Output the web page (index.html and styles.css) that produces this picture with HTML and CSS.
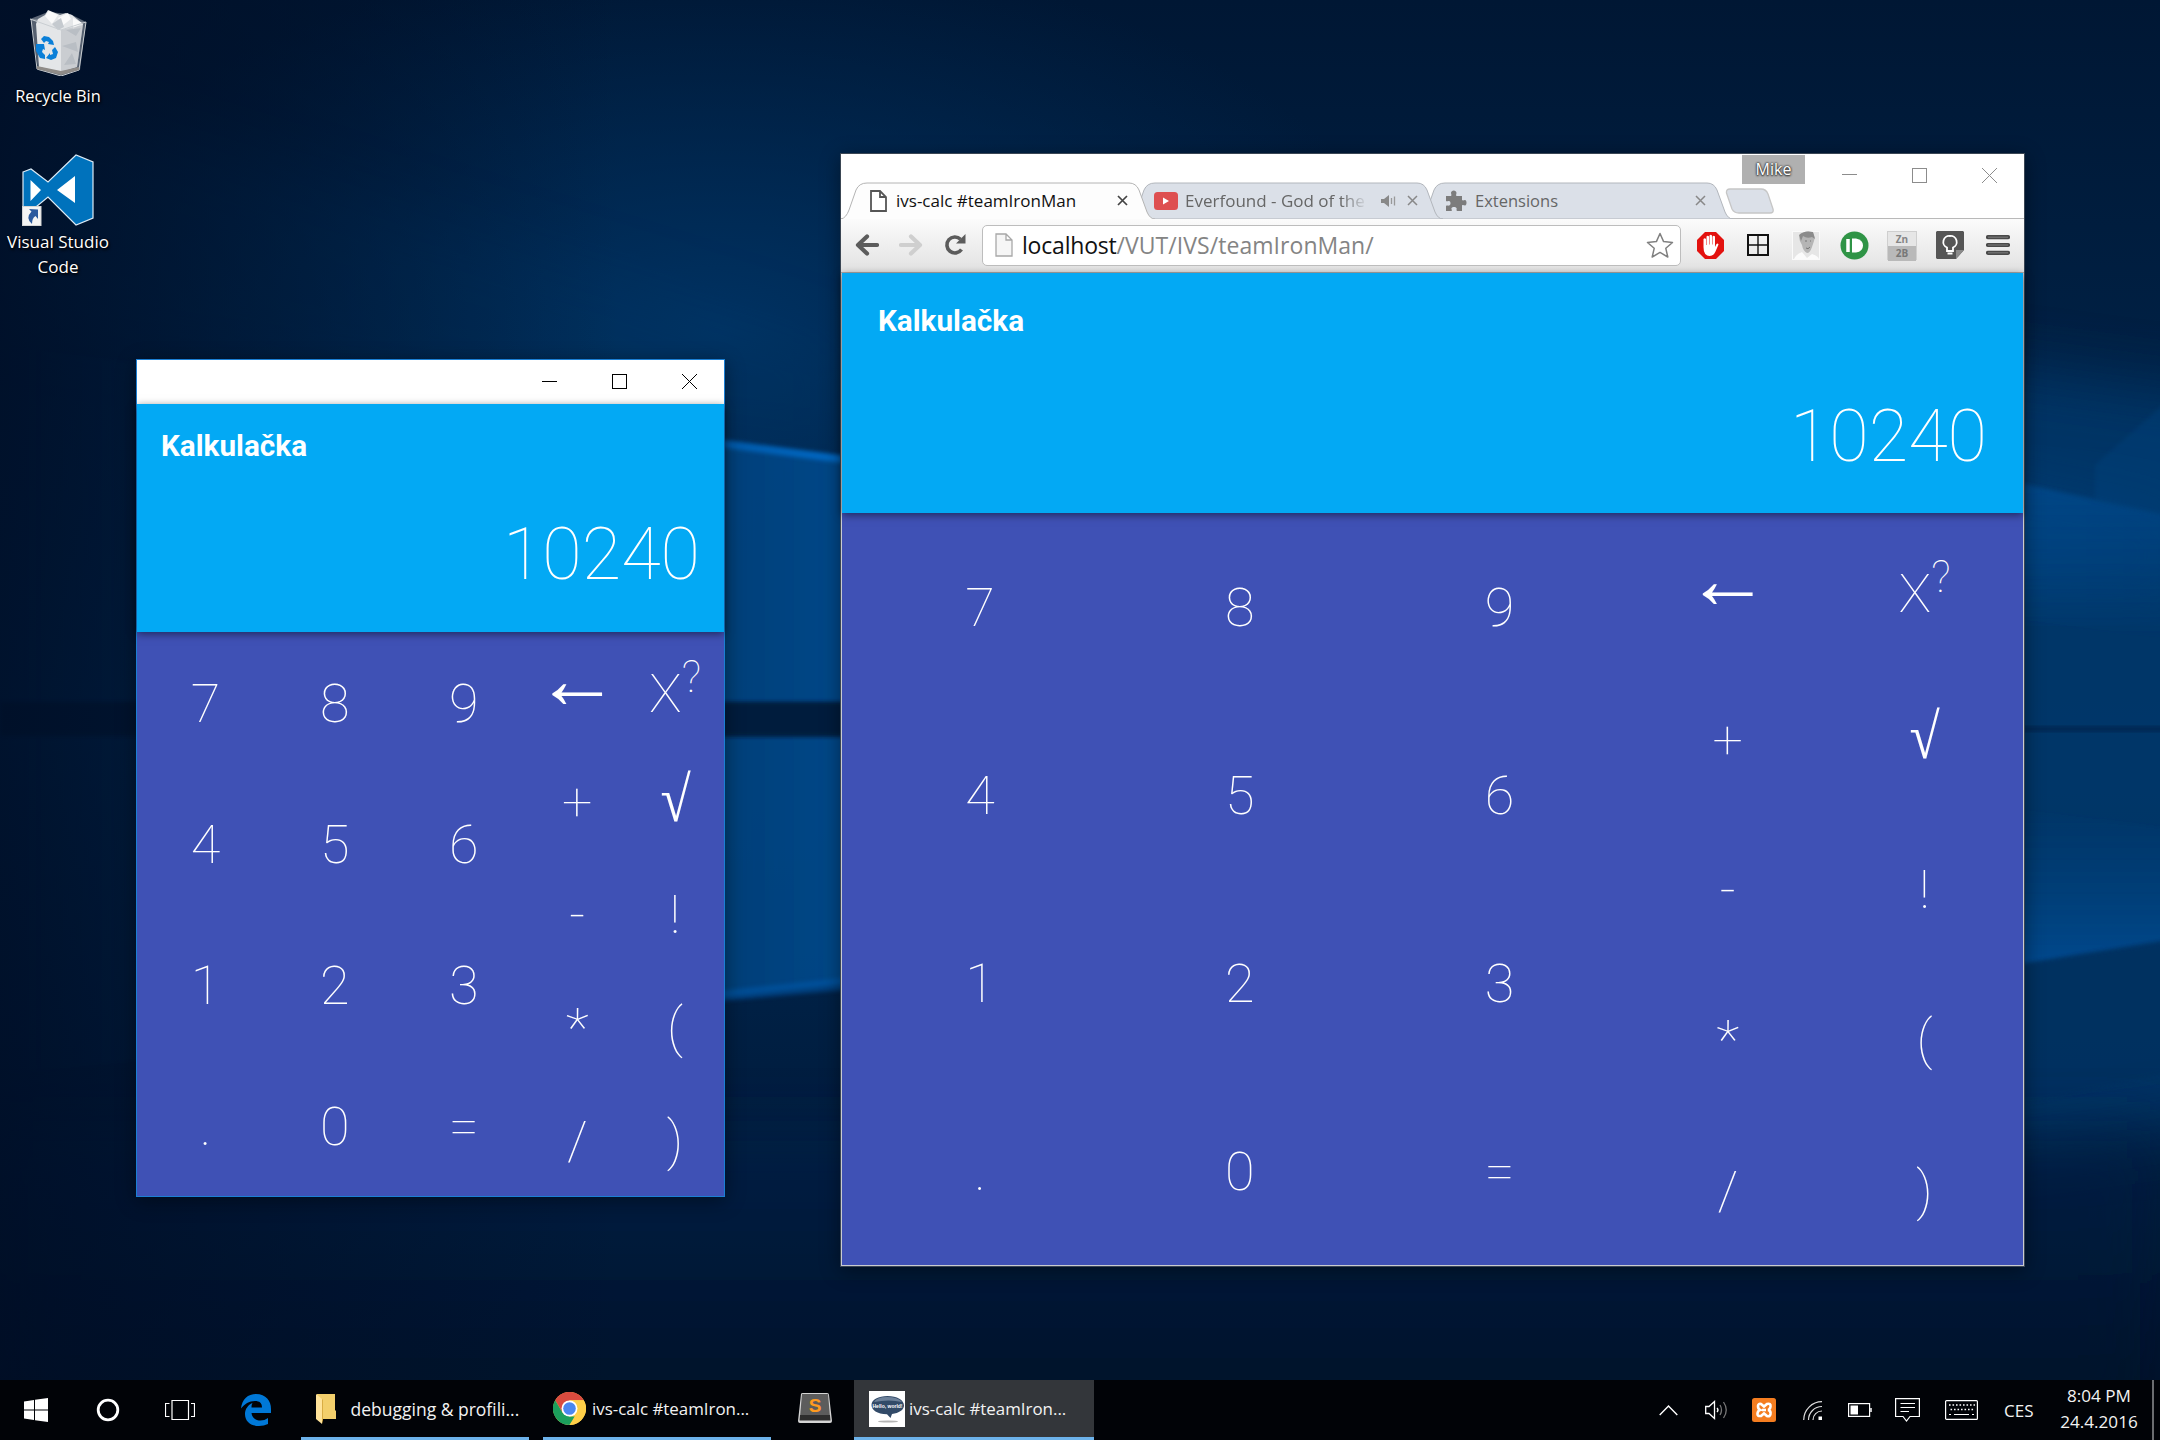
FILE: index.html
```html
<!DOCTYPE html>
<html lang="en">
<head>
<meta charset="utf-8">
<title>Desktop</title>
<link rel="stylesheet" href="styles.css">
</head>
<body>
<div class="desktop">
  <svg class="wallpaper" viewBox="0 0 2160 1440" preserveAspectRatio="none" aria-hidden="true">
    <defs>
      <linearGradient id="base" x1="0" y1="0" x2="0" y2="1"><stop offset="0" stop-color="#001734"/><stop offset=".5" stop-color="#002a54"/><stop offset=".8" stop-color="#001b3c"/><stop offset="1" stop-color="#000e24"/></linearGradient>
      <radialGradient id="top" cx="0" cy="0" r="1" gradientUnits="userSpaceOnUse" gradientTransform="translate(720 330) scale(700 380)"><stop offset="0" stop-color="#003262"/><stop offset="1" stop-color="#002c58" stop-opacity="0"/></radialGradient>
      <linearGradient id="beam" x1="0" y1="0" x2="1" y2="0"><stop offset="0" stop-color="#00376c" stop-opacity="0"/><stop offset=".35" stop-color="#00305c" stop-opacity=".5"/><stop offset="1" stop-color="#004c90"/></linearGradient>
      <linearGradient id="ray" x1="0" y1="0" x2="1" y2="0"><stop offset="0" stop-color="#0068c4" stop-opacity="0"/><stop offset=".6" stop-color="#0068c4" stop-opacity=".5"/><stop offset="1" stop-color="#0070d2"/></linearGradient>
      <linearGradient id="right" x1="0" y1="0" x2="1" y2="0"><stop offset="0" stop-color="#00498c"/><stop offset="1" stop-color="#003c74"/></linearGradient>
      <linearGradient id="dark" x1="0" y1="0" x2="1" y2="0"><stop offset="0" stop-color="#000d24"/><stop offset="1" stop-color="#000d24" stop-opacity="0"/></linearGradient>
      <linearGradient id="foot" x1="0" y1="0" x2="0" y2="1"><stop offset="0" stop-color="#00234a"/><stop offset="1" stop-color="#000f26"/></linearGradient>
      <linearGradient id="fadedown" x1="0" y1="0" x2="0" y2="1"><stop offset="0" stop-color="#004f98" stop-opacity=".7"/><stop offset="1" stop-color="#004785" stop-opacity="0"/></linearGradient>
      <linearGradient id="fadeup" x1="0" y1="1" x2="0" y2="0"><stop offset="0" stop-color="#0052a0" stop-opacity=".75"/><stop offset="1" stop-color="#004785" stop-opacity="0"/></linearGradient>
      <filter id="b2" x="-10%" y="-40%" width="120%" height="180%"><feGaussianBlur stdDeviation="2"/></filter>
      <filter id="b30" x="-20%" y="-20%" width="140%" height="140%"><feGaussianBlur stdDeviation="30"/></filter>
    </defs>
    <rect width="2160" height="1440" fill="url(#base)"/>
    <rect width="2160" height="800" fill="url(#top)"/>
    <path d="M0 80 L840 340 V460 L0 330Z" fill="#003768" opacity=".2" filter="url(#b30)"/>
    <path d="M0 345 L900 465 V704 H0Z" fill="url(#beam)" filter="url(#b2)"/>
    <path d="M0 736 H900 V978 L0 1075Z" fill="url(#beam)" filter="url(#b2)"/>
    <path d="M300 384 L725 440 L900 463 V470 L725 448Z" fill="url(#ray)" filter="url(#b2)"/>
    <path d="M600 1003 L900 972 V985 L600 1012Z" fill="#005cb0" opacity=".5" filter="url(#b2)"/>
    <rect x="0" y="702" width="900" height="34" fill="#001c3d" filter="url(#b2)"/>
    <path d="M1950 360 L2250 400 V1120 L1950 1160Z" fill="#003a70" opacity=".75" filter="url(#b30)"/>
    <path d="M1950 473 L2180 515 V600 L1950 600Z" fill="url(#right)" opacity=".5" filter="url(#b30)"/>
    <path d="M1950 468 L2180 518 V640 L1950 610Z" fill="url(#fadedown)" filter="url(#b2)"/>
    <path d="M2095 465 L2180 390 V520 L2095 500Z" fill="#004785" opacity=".3" filter="url(#b2)"/>
    <path d="M1950 800 L2180 830 V938 L1950 976Z" fill="url(#fadeup)" filter="url(#b2)"/>
    <path d="M1950 975 L2180 940 V1070 L1950 1120Z" fill="#002e5c" opacity=".45" filter="url(#b2)"/>
    <path d="M1950 727 H2180 V731 H1950Z" fill="#001f42" opacity=".8" filter="url(#b2)"/>
    <rect y="1130" width="2160" height="310" fill="url(#foot)" opacity=".65" filter="url(#b30)"/>
    <rect width="620" height="1440" fill="url(#dark)" opacity=".8"/>
  </svg>

  <div class="shortcuts">
    <div class="shortcut bin">
      <svg width="60" height="66" viewBox="0 0 60 66">
        <path d="M3 9 L10 60 L33 66 L52 60 L58 12Z" fill="#9aa2a9" opacity=".55"/>
        <path d="M2 9 L20 2 L42 4 L58 12 L33 20Z" fill="#b9c0c6" opacity=".5"/>
        <path d="M8 14 L11 57 L33 62 L49 57 L55 14 L44 5 L38 3 L32 5 L20 0 L17 5 L10 9Z" fill="#e4e6e8"/>
        <path d="M17 6 L21 1 L30 5 L24 14Z M30 8 L40 3 L43 9 L34 16Z M45 8 L54 13 L45 19Z" fill="#fafafa"/>
        <path d="M24 14 L33 8 L36 17 L30 20Z M38 20 L53 18 L48 26Z M34 36 L48 32 L50 42Z M36 55 L44 43 L48 54Z" fill="#c5cacf"/>
        <path d="M33 20 V62 L49 57 L55 15Z" fill="#aab0b6" opacity=".45"/>
        <path d="M2 9 L33 20 L58 12 M3 9 L9 59 L33 66 L51 60 L58 12" fill="none" stroke="#c9ced2" stroke-width="1"/>
        <path d="M9 59 L33 65 L51 60 L51 57 L33 61 L9 56Z" fill="#8f8b87"/>
        <g fill="#0a7fd8"><path d="M13 29 L16 26 L21 27 L25 31 L26 35 L20 34 L21 32 L18 31 L16 33 Z"/><path d="M8 34 L16 34 L17 40 L15 39 L14 42 L17 45 V49 L12 48 L8 41Z"/><path d="M27 37 L30 42 L28 48 L23 50 L18 48 L22 43 L22 45 L25 44 L24 40Z"/></g>
      </svg>
      <span class="shortcut-label">Recycle Bin</span>
    </div>
    <div class="shortcut code">
      <svg width="72" height="72" viewBox="0 0 72 72">
        <path d="M1 18 L9 15 L26 28 L54 1 L71 8 V64 L54 71 L26 43 L9 57 L1 53Z" fill="#0072bc" stroke="#dcebf6" stroke-width="1.2"/>
        <path d="M8.500 26 V47 L19 36Z M53 22 V49 L35 36Z" fill="#fff"/>
        <rect x=".5" y="52.500" width="18.500" height="19" fill="#f4f4f4" stroke="#d5d5d5"/>
        <path d="M7 55 L16 55.500 V65 L13.500 62 Q10 64 10 70 Q3 64 9.500 57.500Z" fill="#2c5a9e"/>
      </svg>
      <span class="shortcut-label wide">Visual Studio</span><span class="shortcut-label">Code</span>
    </div>
  </div>

  <section class="window app">
    <header class="titlebar">
      <svg width="15" height="15"><path d="M0 7.500H15" stroke="#000"/></svg>
      <svg width="15" height="15"><rect x=".5" y=".5" width="14" height="14" fill="none" stroke="#000"/></svg>
      <svg width="15" height="15"><path d="M0 0L15 15M15 0L0 15" stroke="#000"/></svg>
    </header>
    <div class="calc">
      <div class="display"><h1>Kalkulačka</h1><output>10240</output></div>
      <div class="keypad">
        <div class="digits"><b>7</b><b>8</b><b>9</b><b>4</b><b>5</b><b>6</b><b>1</b><b>2</b><b>3</b><b>.</b><b>0</b><b>=</b></div>
        <div class="ops"><b><i class="arrow">←</i></b><b class="pow">X<sup>?</sup></b><b>+</b><b><i class="root">√</i></b><b>-</b><b>!</b><b>*</b><b>(</b><b>/</b><b>)</b></div>
      </div>
    </div>
  </section>

  <section class="window chrome">
    <header class="strip">
      <div class="tab active">
        <svg class="shape" width="314" height="37" viewBox="0 0 314 37"><path d="M0 37 Q5 36 8 28 L15 8 Q18 1 26 1 H288 Q295 1 298 8 L306 30 Q309 37 314 37" fill="#fdfdfd" stroke="#b4b4b4"/></svg>
        <svg class="fav" width="17" height="22" viewBox="0 0 17 22"><path d="M1 1H10L16 7V21H1Z M10 1V7H16" fill="#fff" stroke="#555" stroke-width="1.800"/></svg>
        <span class="tab-title t1">ivs-calc #teamIronMan</span>
        <svg class="close" width="11" height="11"><path d="M1 1L10 10M10 1L1 10" stroke="#444" stroke-width="1.700"/></svg>
      </div>
      <div class="tab second">
        <svg class="shape" width="314" height="37" viewBox="0 0 314 37"><path d="M0 37 Q5 36 8 28 L15 8 Q18 1 26 1 H288 Q295 1 298 8 L306 30 Q309 37 314 37Z" fill="#dbe0e8" stroke="#b2b6bc"/></svg>
        <svg class="fav" width="24" height="18" viewBox="0 0 24 18"><rect width="24" height="18" rx="3.500" fill="#de4f50"/><path d="M9 5.500V12.500L15 9Z" fill="#fff"/></svg>
        <span class="tab-title t2">Everfound - God of the</span>
        <svg class="sound" width="15" height="12" viewBox="0 0 15 12"><path d="M0 4H3L8 0V12L3 8H0Z" fill="#888"/><path d="M10.500 3V9M13.500 1.500V10.500" stroke="#999" stroke-width="1.300"/></svg>
        <svg class="close" width="11" height="11"><path d="M1 1L10 10M10 1L1 10" stroke="#888" stroke-width="1.500"/></svg>
      </div>
      <div class="tab third">
        <svg class="shape" width="314" height="37" viewBox="0 0 314 37"><path d="M0 37 Q5 36 8 28 L15 8 Q18 1 26 1 H288 Q295 1 298 8 L306 30 Q309 37 314 37Z" fill="#dbe0e8" stroke="#b2b6bc"/></svg>
        <svg class="fav" width="22" height="22" viewBox="0 0 22 22"><path d="M1 6H6C7 5 6 4 6 3C6 -.5 11.500 -.5 11.500 3C11.500 4 10.500 5 11.500 6H17V10C18 11 19 10 20 10C22 10.500 22 15 20 15.500C19 15.500 18 14.500 17 15.500V21H12C11 20 12 19 11.500 18C11 16.500 7 16.500 6.500 18C6 19 7.500 20 6.500 21H1V16C2 15 3 16 4 15.500C6 15 6 11.500 4 11C3 10.500 2 12 1 11Z" fill="#7c7c7c"/></svg>
        <span class="tab-title t3">Extensions</span>
        <svg class="close" width="11" height="11"><path d="M1 1L10 10M10 1L1 10" stroke="#888" stroke-width="1.500"/></svg>
      </div>
      <svg class="newtab" width="49" height="26" viewBox="0 0 49 26"><path d="M5 1H36Q41 1 43 6L48 21Q49 25 45 25H14Q9 25 7 21L1.500 5Q1 1 5 1Z" fill="#dbe0e8" stroke="#c6c6c6" stroke-width="1.300"/></svg>
      <div class="frame-controls">
        <span class="profile">Mike</span>
        <svg width="15" height="15"><path d="M0 6.500H15" stroke="#8c8c8c"/></svg>
        <svg width="15" height="15"><rect x=".5" y=".5" width="14" height="14" fill="none" stroke="#8c8c8c"/></svg>
        <svg width="15" height="15"><path d="M0 0L15 15M15 0L0 15" stroke="#8c8c8c"/></svg>
      </div>
    </header>
    <nav class="toolbar">
      <span class="nav"><svg width="24" height="22" viewBox="0 0 24 22"><path d="M22 11H4M12 2.500L3 11L12 19.500" fill="none" stroke="#5c5c5c" stroke-width="4.200" stroke-linecap="round" stroke-linejoin="round"/></svg></span>
      <span class="nav"><svg width="24" height="22" viewBox="0 0 24 22"><path d="M2 11H20M12 2.500L21 11L12 19.500" fill="none" stroke="#cfcfcf" stroke-width="4.200" stroke-linecap="round" stroke-linejoin="round"/></svg></span>
      <span class="nav"><svg width="22" height="22" viewBox="0 0 22 22"><path d="M17.500 15.500A8 8 0 1 1 16.500 5.200" fill="none" stroke="#5c5c5c" stroke-width="3.600"/><path d="M21.500 0V9.500H12Z" fill="#5c5c5c"/></svg></span>
      <div class="omnibox">
        <svg width="18" height="24" viewBox="0 0 18 24"><path d="M1 1H11L17 7V23H1Z M11 1V7H17" fill="#f6f6f6" stroke="#a8a8a8" stroke-width="1.300"/></svg>
        <span class="url"><em>localhost</em>/VUT/IVS/teamIronMan/</span>
        <svg width="28" height="27" viewBox="0 0 28 27"><path d="M14 1.500L17.600 9.600L26.500 10.500L19.800 16.300L21.800 25L14 20.400L6.200 25L8.200 16.300L1.500 10.500L10.400 9.600Z" fill="#fff" stroke="#808080" stroke-width="1.500" stroke-linejoin="round"/></svg>
      </div>
      <span class="ext"><svg width="27" height="27" viewBox="0 0 27 27"><path d="M8 0H19L27 8V19L19 27H8L0 19V8Z" fill="#e3120f"/><path d="M6.500 15V7Q7.700 5.500 9 7V13H9.500V4.500Q10.700 3 12 4.500V12.500H12.500V3.500Q13.700 2 15 3.500V12.500H15.500V4.500Q16.700 3 18 4.500V15L19.500 12Q21 11 21.500 12.500L18.500 19.500Q16.500 24 12.500 24Q6.500 23.500 6.500 15Z" fill="#fff"/></svg></span>
      <span class="ext"><svg width="22" height="22" viewBox="0 0 22 22"><path d="M1 1H21V21H1Z" fill="none" stroke="#111" stroke-width="2"/><path d="M11 1V21M1 11H21" stroke="#111" stroke-width="1.400"/></svg></span>
      <span class="ext"><svg width="28" height="29" viewBox="0 0 28 29"><rect x=".5" y=".5" width="27" height="28" fill="#e6e6e6" stroke="#fafafa"/><path d="M2 28Q4 23 10 21L15 27L20 23Q26 25 27 28Z" fill="#fbfbfb"/><path d="M8 4Q13 -1 20 1Q24 4 22 10L20 16Q18 22 15 22Q11 20 10 14Q6 8 8 4Z" fill="#b5b5b5"/><path d="M7 4Q12 -1 21 1L23 8L20 6Q15 8 11 5L9 10Z" fill="#8b8b8b"/><path d="M13 10H15M18 10H19M14 17Q16 19 18 16" stroke="#777" fill="none"/></svg></span>
      <span class="ext"><svg width="29" height="29" viewBox="0 0 29 29"><circle cx="14.500" cy="14.500" r="14" fill="#2f9446"/><path d="M8 8V21" stroke="#fff" stroke-width="3.500"/><path d="M12 7.500H16Q23 9 23 14.500Q23 20.500 16 21.500H12Z" fill="#fff"/></svg></span>
      <span class="ext"><span class="zn"><span>Zn</span><span class="zb">2B</span></span></span>
      <span class="ext"><svg width="28" height="28" viewBox="0 0 28 28"><path d="M1 0H27L28 1V19L20 28H1L0 27V1Z" fill="#555"/><path d="M20 28V19H28Z" fill="#8b8b8b"/><path d="M14 5A6 6 0 0 0 11 16.500V20H17V16.500A6 6 0 0 0 14 5Z" fill="none" stroke="#fff" stroke-width="1.800"/><path d="M11.500 22.500H16.500" stroke="#fff" stroke-width="2"/></svg></span>
      <span class="ext"><svg width="24" height="20" viewBox="0 0 24 20"><path d="M2 2.200H22M2 10H22M2 17.800H22" stroke="#4a4a4a" stroke-width="4.200" stroke-linecap="round"/><path d="M2 2.200H22M2 10H22M2 17.800H22" stroke="#6d6d6d" stroke-width="1.500"/></svg></span>
    </nav>
    <div class="calc">
      <div class="display"><h1>Kalkulačka</h1><output>10240</output></div>
      <div class="keypad">
        <div class="digits"><b>7</b><b>8</b><b>9</b><b>4</b><b>5</b><b>6</b><b>1</b><b>2</b><b>3</b><b>.</b><b>0</b><b>=</b></div>
        <div class="ops"><b><i class="arrow">←</i></b><b class="pow">X<sup>?</sup></b><b>+</b><b><i class="root">√</i></b><b>-</b><b>!</b><b>*</b><b>(</b><b>/</b><b>)</b></div>
      </div>
    </div>
  </section>

  <footer class="taskbar">
    <div class="cell start"><svg width="24" height="24" viewBox="0 0 24 24"><path d="M0 3.500L10 2V11.500H0ZM11 1.800L24 0V11.500H11ZM0 12.500H10V22L0 20.500ZM11 12.500H24V24L11 22.200Z" fill="#fff"/></svg></div>
    <div class="cell"><svg width="24" height="24" viewBox="0 0 24 24"><circle cx="12" cy="12" r="9.800" fill="none" stroke="#fff" stroke-width="2.800"/></svg></div>
    <div class="cell"><svg width="30" height="20" viewBox="0 0 30 20"><path d="M7 .5H23.500V19.500H7ZM4.500 3.500H.5V16.500H4.500M26 3.500H29.500V16.500H26" fill="none" stroke="#fff" stroke-width="1.200"/></svg></div>
    <div class="cell edge"><svg width="30" height="32" viewBox="0 0 30 32"><path d="M0 14.500C1 5 7 0 15 0C25 0 30 7 30 15V19H10.500C11 24 15 26.500 19.500 26.500Q23.500 26.500 27 24V30Q23 32 18 32C9 32 4 27 4 20C4 15 7 11 11.500 9C10.500 11 10.500 12 10.500 13.500H21C21 9 18.500 7 14 7C8 7 3.500 10 0 14.500Z" fill="#0078d7"/></svg></div>
    <div class="task folder"><svg width="20" height="32" viewBox="0 0 20 32"><path d="M1 1H19V17L20 18V26H1Z" fill="#f3cf6b"/><path d="M0 1L6 6V31L0 26Z" fill="#ffe39a"/><path d="M6 6V31L7 27V7Z" fill="#d9ac43"/></svg><span class="k1">debugging &amp; profili...</span></div>
    <div class="task browser"><svg width="33" height="33" viewBox="0 0 33 33"><circle cx="16.500" cy="16.500" r="16.500" fill="#ffcf48"/><path d="M2.200 8.200A16.500 16.500 0 0 1 30.800 8.200H16.500L9.500 20.500Z" fill="#d94b3f"/><path d="M2.200 8.200L9.400 20.600L16.500 24.500H23.500L16.500 33A16.500 16.500 0 0 1 2.200 8.200Z" fill="#1b9f5c"/><path d="M30.800 8.200H16.500L24 13L24 20.500L16.500 33A16.500 16.500 0 0 0 30.800 8.200Z" fill="#ffcf48"/><circle cx="16.500" cy="16.500" r="8" fill="#fff"/><circle cx="16.500" cy="16.500" r="6.300" fill="#4b87f0"/></svg><span class="k2">ivs-calc #teamIron...</span></div>
    <div class="cell sublime"><svg width="34" height="30" viewBox="0 0 34 30"><path d="M3 1Q3 0 5 0H29Q31 0 31 2L34 28Q34 30 32 30H2Q0 30 0 28Z" fill="#d5d5d5"/><path d="M4 1H30L32 24H2Z" fill="#5c5c5c"/><path d="M2 22H32L32.500 27.500H1.500Z" fill="#2e2e2e"/><text x="17" y="18.500" text-anchor="middle" class="slogo">S</text></svg></div>
    <div class="task current"><svg width="36" height="36" viewBox="0 0 36 36"><rect width="36" height="36" fill="#fff"/><ellipse cx="19" cy="30.500" rx="10" ry="1" fill="#b5b5b5"/><path d="M18.500 5C28 5 35 9 35 14.500C35 19 30 22 23 23L21.500 27L18 23.300C8 23 2.500 19 2.500 14C2.500 8.500 9.500 5 18.500 5Z" fill="#324a68"/><path d="M5 11Q8 6 18 6Q29 6 33 11Q20 8 5 11Z" fill="#6d819a"/><text x="18.500" y="16.500" text-anchor="middle" class="hello">Hello, world!</text></svg><span class="k3">ivs-calc #teamIron...</span></div>
    <div class="tray">
      <svg class="chev" width="19" height="11" viewBox="0 0 19 11"><path d="M.7 10L9.500 1L18.300 10" fill="none" stroke="#fff" stroke-width="1.400"/></svg>
      <svg class="vol" width="23" height="20" viewBox="0 0 23 20"><path d="M.7 6.500H4L9.500 1.500V18.500L4 13.500H.7Z" fill="none" stroke="#fff" stroke-width="1.300"/><path d="M12 8Q14 10 12 12" fill="none" stroke="#fff" stroke-width="1.300"/><path d="M15 5Q18 10 15 15M18.500 2Q24 10 18.500 18" fill="none" stroke="#777" stroke-width="1.300"/></svg>
      <svg class="xampp" width="24" height="24" viewBox="0 0 24 24"><rect width="24" height="24" rx="2.500" fill="#f47d20"/><path d="M6 8Q6 5.500 9 6L12 8.500L15 6Q19 5 18.500 8.500Q18 11.500 16 12Q19 12.500 18.500 16Q18 19 15 18L12 15.500L9 18Q5 18.500 5.500 15.500Q6 12.500 8 12Q6 11 6 8Z" fill="none" stroke="#fff" stroke-width="2.600"/><path d="M10 12H14" stroke="#fff" stroke-width="2.600"/></svg>
      <svg class="wifi" width="19" height="19" viewBox="0 0 19 19"><path d="M.7 19A18.300 18.300 0 0 1 19 .7M5.500 19A13.500 13.500 0 0 1 19 5.500M10 19A9 9 0 0 1 19 10" fill="none" stroke="#ddd" stroke-width="1.200"/><rect x="15.500" y="15.500" width="3.500" height="3.500" fill="#fff"/></svg>
      <svg class="bat" width="24" height="14" viewBox="0 0 24 14"><rect x=".6" y=".6" width="21" height="12.800" fill="none" stroke="#fff" stroke-width="1.200"/><rect x="2.500" y="2.500" width="7.500" height="9" fill="#fff"/><path d="M23 5V9" stroke="#fff" stroke-width="1.500"/></svg>
      <svg class="note" width="25" height="24" viewBox="0 0 25 24"><path d="M.6 .6H24.400V18.500H15L11.500 23L8 18.500H.6Z" fill="none" stroke="#fff" stroke-width="1.200"/><path d="M5.500 5.500H20M5.500 9.500H20M5.500 13.500H14" stroke="#fff" stroke-width="1.200"/></svg>
      <svg class="kbd" width="33" height="20" viewBox="0 0 33 20"><rect x=".6" y=".6" width="31.800" height="18.800" rx="1" fill="none" stroke="#fff" stroke-width="1.200"/><path d="M4 5H30M5.500 9.500H29" stroke="#fff" stroke-width="1.400" stroke-dasharray="1.600 1.900"/><path d="M4 14.500H6M9 14.500H24M27 14.500H29" stroke="#fff" stroke-width="1.200"/></svg>
      <span class="lang">CES</span>
      <div class="clock"><span class="time">8:04 PM</span><span class="date">24.4.2016</span></div>
      <i class="peek"></i>
    </div>
  </footer>
</div>
</body>
</html>
```
FILE: styles.css
```css
* { box-sizing: border-box; }
body { margin: 0; font-family: "Open Sans", sans-serif; font-size: 17px; }
svg { display: block; flex: none; }
.desktop { position: relative; width: 2160px; height: 1440px; overflow: hidden; display: flex; flex-direction: column; justify-content: space-between; background: #001a38; }
.wallpaper { position: absolute; inset: 0; width: 100%; height: 100%; }

.shortcuts { position: relative; display: flex; flex-direction: column; gap: 46px; width: 116px; padding-top: 10px; }
.shortcut { display: flex; flex-direction: column; align-items: center; color: #fff; line-height: 25px; text-shadow: 1px 2px 3px #000, 0 0 2px #000; }
.bin .shortcut-label { margin-top: 7px; font-size: 16.400px; }
.code .shortcut-label { font-size: 17px; }
.code .wide { margin-top: 3px; }

.window { position: absolute; display: flex; flex-direction: column; box-shadow: 0 4px 18px rgba(0,0,0,.42); }
.app { left: 136px; top: 359px; width: 589px; height: 838px; border: 1px solid #1b7fd4; }
.titlebar { height: 44px; background: #fff; display: flex; justify-content: flex-end; align-items: center; gap: 55px; padding: 0 27px 1px 0; }
.chrome { left: 840px; top: 153px; width: 1185px; height: 1114px; border: 1px solid #3a4654; background: #fff; }

.calc { flex: 1; display: flex; flex-direction: column; min-height: 0; font-family: Roboto, sans-serif; color: #fff; }
.chrome .calc { border: solid #c9cbd0; border-width: 0 1px 1px; }
.display { position: relative; z-index: 1; height: 228px; flex: none; background: #03a9f4; padding: 24px 24px 35px 24px; display: flex; flex-direction: column; justify-content: space-between; box-shadow: 0 2px 8px rgba(0,0,0,.5); }
.chrome .display { height: 240px; padding: 30px 36px 34px; }
.display h1 { margin: 0; font-size: 29.700px; font-weight: 700; line-height: 36px; }
.display output { font-size: 72px; font-weight: 100; line-height: 84px; text-align: right; }
.keypad { flex: 1; display: flex; background: #3f51b5; min-height: 0; }
.keypad b { font-weight: 100; font-size: 54px; line-height: 63px; display: flex; align-items: center; justify-content: center; padding-top: 1px; min-height: 0; }
.digits { width: 66.667%; padding-left: .7%; display: grid; grid-template: repeat(4, 1fr) / repeat(3, 1fr); }
.ops { flex: 1; display: grid; grid-template: repeat(5, 1fr) / repeat(2, 1fr); }
.keypad i { font-style: normal; }
.keypad .arrow { font-family: "Liberation Sans", sans-serif; font-size: 84px; line-height: 63px; margin-top: -19px; }
.keypad .root { font-family: "Liberation Serif", serif; font-size: 64px; line-height: 63px; font-weight: 400; margin-top: -5px; transform: scaleX(.86); }
.keypad .pow { padding-top: 11px; }
.pow sup { font-size: 45px; line-height: 45px; align-self: center; margin-top: -34px; }

.strip { position: relative; height: 65px; flex: none; display: flex; align-items: flex-end; background: #fff; border-bottom: 1px solid #b9b9b9; }
.tab { position: relative; width: 314px; height: 37px; margin-bottom: -1px; display: flex; align-items: center; flex: none; color: #666; }
.tab + .tab { margin-left: -26px; }
.tab > * { position: relative; }
.tab .shape { position: absolute; left: 0; top: 0; }
.active { z-index: 3; color: #111; padding-left: 29px; }
.second { z-index: 2; padding-left: 25px; }
.tab + .third { z-index: 1; margin-left: -24px; padding-left: 26px; }
.tab-title { line-height: 24px; white-space: nowrap; }
.t1 { margin-left: 9px; }
.t2 { margin-left: 7px; width: 183px; overflow: hidden; -webkit-mask-image: linear-gradient(90deg, #000 85%, transparent); mask-image: linear-gradient(90deg, #000 85%, transparent); }
.t3 { margin-left: 8px; font-size: 16.500px; }
.tab .close { margin-left: auto; margin-right: 27px; }
.second .sound { margin-left: 13px; }
.second .close { margin-right: 25px; }
.newtab { margin: 0 0 4px -8px; position: relative; }
.frame-controls { position: absolute; right: 27px; top: 1px; display: flex; align-items: flex-start; gap: 55px; }
.frame-controls svg { margin-top: 13px; }
.profile { width: 63px; height: 29px; margin-right: -18px; background: #b0b0b0; color: #fff; font-size: 16px; line-height: 28px; text-align: center; text-shadow: 0 0 2px #333, 0 0 2px #333, 0 1px 2px #333; }

.toolbar { height: 54px; flex: none; display: flex; align-items: center; padding: 0 0 1px 4px; background: linear-gradient(#fbfbfb, #e2e2e2); border-bottom: 1px solid #a9a9a9; }
.nav { width: 44px; display: flex; justify-content: center; }
.omnibox { width: 699px; height: 41px; margin: 0 5px 0 5px; padding: 0 6px 0 12px; display: flex; align-items: center; background: #fff; border: 1.500px solid #bdbdbd; border-radius: 5px; }
.url { flex: 1; margin-left: 9px; font-size: 23px; line-height: 36px; color: #848484; letter-spacing: .05px; }
.url em { font-style: normal; color: #111; letter-spacing: -.2px; }
.ext { width: 48px; display: flex; justify-content: center; }
.zn { width: 30px; height: 29px; display: grid; grid-template-rows: 14px 15px; font: 700 10px/14px "Open Sans", sans-serif; text-align: center; color: #858585; background: #e6e6e6; border: 1px solid #cfcfcf; }
.zb { background: #b9b9b9; color: #777; }

.taskbar { position: relative; height: 60px; display: flex; background: #010307; color: #f2f2f2; }
.cell { width: 72px; display: flex; align-items: center; justify-content: center; }
.edge { width: 85px; padding-right: 5px; }
.sublime { width: 83px; padding: 0 0 4px 4px; }
.task { display: flex; align-items: center; border-bottom: 3px solid #6cb2ea; white-space: nowrap; }
.folder { width: 228px; padding-left: 15px; }
.k1 { margin-left: 14.500px; font-size: 17.500px; }
.browser { width: 228px; padding-left: 10px; margin-left: 14px; }
.k2 { margin-left: 6px; }
.k3 { margin-left: 4px; }
.k2, .k3 { font-size: 16.900px; }
.current { width: 240px; padding-left: 15px; background: #33363a; }
.slogo { font: 700 19px "Liberation Sans", sans-serif; fill: #ff9a1f; }
.hello { font: 700 5px "Liberation Sans", sans-serif; fill: #fff; }
.tray { flex: 1; display: flex; align-items: center; justify-content: flex-end; }
.vol { margin-left: 27px; }
.xampp { margin-left: 24px; }
.wifi { margin-left: 27px; }
.bat { margin-left: 26px; }
.note { margin-left: 23px; }
.kbd { margin-left: 25px; }
.lang { margin-left: 26px; width: 31px; }
.clock { margin-left: 22px; width: 84px; display: flex; flex-direction: column; align-items: center; line-height: 26px; font-size: 17.100px; padding-bottom: 2px; }
.peek { margin: 0 6px 0 11px; width: 2px; align-self: stretch; background: #6a6c6f; }
```
